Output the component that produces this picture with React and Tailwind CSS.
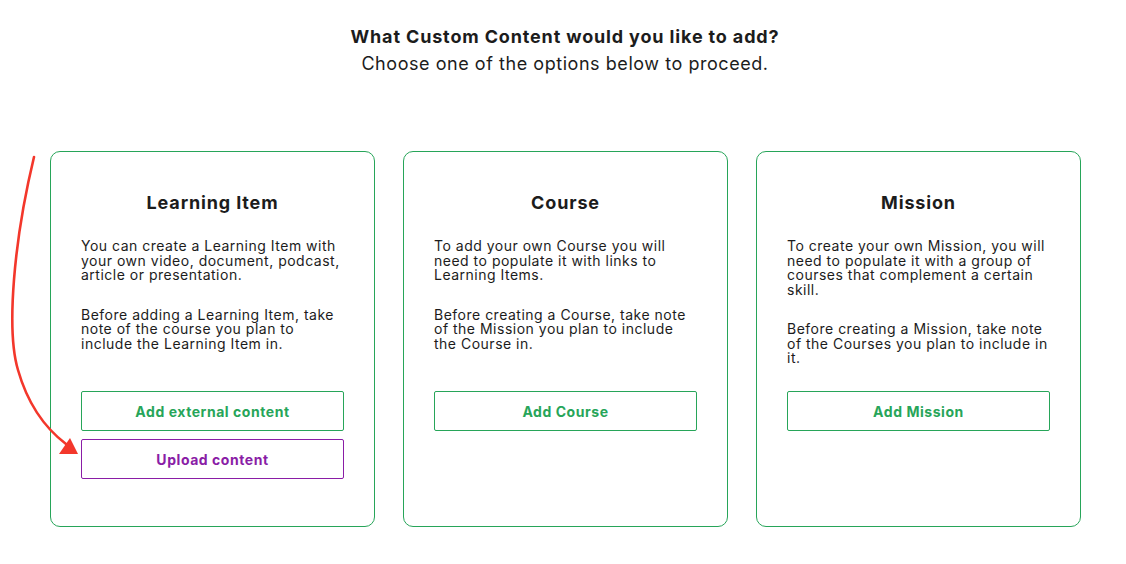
import React from "react";

const cards = [
  {
    title: "Learning Item",
    paras: [
      ["You can create a Learning Item with", "your own video, document, podcast,", "article or presentation."],
      ["Before adding a Learning Item, take", "note of the course you plan to", "include the Learning Item in."],
    ],
    buttons: [
      { label: "Add external content", tone: "green" },
      { label: "Upload content", tone: "purple" },
    ],
  },
  {
    title: "Course",
    paras: [
      ["To add your own Course you will", "need to populate it with links to", "Learning Items."],
      ["Before creating a Course, take note", "of the Mission you plan to include", "the Course in."],
    ],
    buttons: [{ label: "Add Course", tone: "green" }],
  },
  {
    title: "Mission",
    paras: [
      ["To create your own Mission, you will", "need to populate it with a group of", "courses that complement a certain", "skill."],
      ["Before creating a Mission, take note", "of the Courses you plan to include in", "it."],
    ],
    buttons: [{ label: "Add Mission", tone: "green" }],
  },
];

const Arrow = () => (
  <svg
    className="absolute left-0 top-0 pointer-events-none"
    width="100"
    height="480"
    viewBox="0 0 100 480"
    fill="none"
  >
    <path
      d="M34 157 C 14 240, 6 330, 18 370 C 28 405, 45 428, 66 444"
      stroke="#f3372b"
      strokeWidth="2.6"
      strokeLinecap="round"
    />
    <polygon points="78,454 59,454 70,438" fill="#f3372b" />
  </svg>
);

const OptionButton = ({ label, tone }) => (
  <button
    className={
      tone === "purple"
        ? "h-10 w-full border border-[#8a1da6] rounded-[2px] text-[#8a1da6] text-[14px] tracking-[0.55px] font-bold bg-white"
        : "h-10 w-full border border-[#27a559] rounded-[2px] text-[#27a559] text-[14px] tracking-[0.55px] font-bold bg-white"
    }
  >
    {label}
  </button>
);

const Card = ({ card }) => (
  <div className="w-[325px] h-[376px] border border-[#27a559] rounded-[10px] bg-white px-[30px] pt-[39px]">
    <h2 className="text-center text-[18px] tracking-[0.85px] leading-6 font-bold text-[#1c1c1c]">{card.title}</h2>
    <div className="h-[152px] mt-[24px] text-[14px] tracking-[0.5px] leading-[14.5px] text-[#1c1c1c]">
      {card.paras.map((p, i) => (
        <p key={i} className={i === 0 ? "mb-[25px]" : ""}>
          {p.map((line, j) => (
            <span key={j} className="block whitespace-nowrap">
              {line}
            </span>
          ))}
        </p>
      ))}
    </div>
    <div className="flex flex-col gap-2">
      {card.buttons.map((b) => (
        <OptionButton key={b.label} {...b} />
      ))}
    </div>
  </div>
);

export default function App() {
  return (
    <div
      className="relative w-[1126px] h-[564px] bg-white overflow-hidden"
      style={{ fontFamily: "Inter, 'Noto Sans', sans-serif" }}
    >
      <div className="pt-[25px] text-center text-[#1c1c1c] pl-[4px]">
        <h1 className="text-[18px] tracking-[0.85px] leading-6 font-bold">What Custom Content would you like to add?</h1>
        <p className="text-[18px] tracking-[0.55px] leading-6 mt-[3px]">Choose one of the options below to proceed.</p>
      </div>
      <div className="flex gap-7 pl-[50px] mt-[75px]">
        {cards.map((c) => (
          <Card key={c.title} card={c} />
        ))}
      </div>
      <Arrow />
    </div>
  );
}
